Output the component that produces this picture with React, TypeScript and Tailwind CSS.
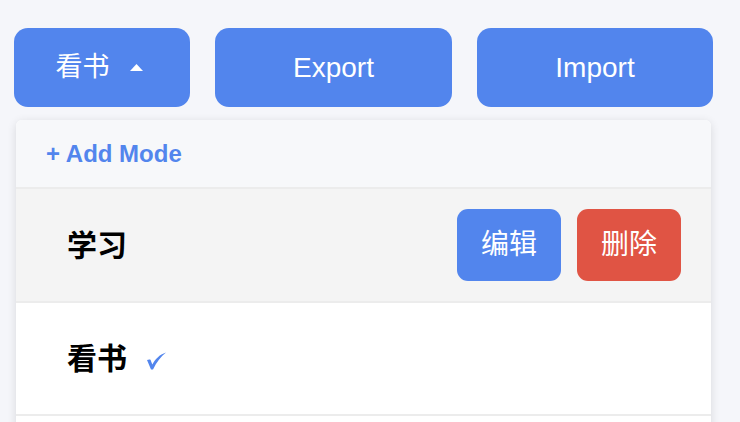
const font = { fontFamily: '"Liberation Sans", "Noto Sans CJK SC", sans-serif' };

export default function App() {
  return (
    <div className="min-h-screen bg-[#f5f6fa] overflow-hidden" style={font}>
      <div className="flex gap-[25px] pl-[14px] pt-[28px]">
        <button className="w-[176px] h-[79px] rounded-[14px] bg-[#5285ed] text-white text-[27px] flex items-center justify-center gap-[20px] pr-[6px]">
          <span>看书</span>
          <svg width="13" height="7" viewBox="0 0 13 7">
            <path d="M6.5 0 L13 7 L0 7 Z" fill="white" />
          </svg>
        </button>
        <button className="w-[237px] h-[79px] rounded-[14px] bg-[#5285ed] text-white text-[28px]">
          Export
        </button>
        <button className="w-[236px] h-[79px] rounded-[14px] bg-[#5285ed] text-white text-[28px]">
          Import
        </button>
      </div>

      <div className="ml-[16px] mt-[13px] w-[695px] rounded-t-[6px] bg-white shadow-[0_2px_10px_rgba(0,0,0,0.12)]">
        <div className="h-[69px] flex items-center pl-[30px] bg-[#f7f8fa] border-b-2 border-[#ececec] rounded-t-[6px]">
          <span className="text-[#5285ed] text-[24px] font-bold">+ Add Mode</span>
        </div>

        {/* 学习 row (hovered) */}
        <div className="h-[114px] flex items-center justify-between pl-[51px] pr-[30px] bg-[#f4f4f4] border-b-2 border-[#ececec]">
          <span className="text-black text-[30px] font-bold">学习</span>
          <div className="flex gap-[16px]">
            <button className="w-[104px] h-[72px] rounded-[11px] bg-[#5285ed] text-white text-[28px]">编辑</button>
            <button className="w-[104px] h-[72px] rounded-[11px] bg-[#e05444] text-white text-[28px]">删除</button>
          </div>
        </div>

        {/* 看书 row (active) */}
        <div className="h-[113px] flex items-center pl-[51px] bg-white border-b-2 border-[#ececec]">
          <span className="text-black text-[30px] font-bold">看书</span>
          <svg className="ml-[19px] mt-[4px]" width="21" height="18" viewBox="0 0 21 18">
            <path
              d="M1 8 C2.5 7.5 3.5 7.3 4.5 7.8 L6.3 12.5 C9 7.5 13.5 2.5 20 0.5 C15 4.5 10.5 10 7 17.5 L5 17.5 Z"
              fill="#5285ed"
            />
          </svg>
        </div>
        <div className="h-[40px] bg-white" />
      </div>
    </div>
  );
}
